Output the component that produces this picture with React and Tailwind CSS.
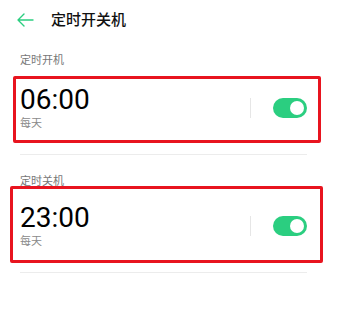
import React from 'react';

const font = { fontFamily: 'Roboto, "Noto Sans CJK SC", sans-serif' };

const Toggle = () => (
  <div className="w-[34px] h-[20px] rounded-full bg-[#2bce80] flex items-center justify-end pr-[3px]">
    <div className="w-[14px] h-[14px] rounded-full bg-white" />
  </div>
);

const TimerRow = ({ time, boxClass }) => (
  <div className={`border-[3px] border-[#e8141f] rounded-[2px] flex items-center ${boxClass}`}>
    <div className="flex-1 flex flex-col">
      <span className="text-[28px] leading-[30px] text-black">{time}</span>
      <span className="text-[11px] leading-[14px] text-[#8a8a8a] mt-[2px]">每天</span>
    </div>
    <div className="w-px h-[20px] bg-[#e6e6e6]" />
    <Toggle />
  </div>
);

export default function App() {
  return (
    <div className="w-[342px] h-[327px] bg-white" style={font}>
      <div className="h-[40px] flex items-center">
        <svg className="ml-[17px] w-[17px] h-[14px]" viewBox="0 0 17 14" fill="none" stroke="#2bce80" strokeWidth="1.4" strokeLinecap="round" strokeLinejoin="round">
          <path d="M1 7h15M7 1L1 7l6 6" />
        </svg>
        <span className="ml-[17px] text-[15px] font-medium text-[#111]">定时开关机</span>
      </div>

      <div className="pl-[20px] pt-[14px] text-[11px] leading-[14px] text-[#777]">定时开机</div>
      <TimerRow
        time="06:00"
        boxClass="mt-[8px] ml-[13px] w-[308px] h-[67px] pl-[4px] pr-[11px] gap-[22px] pb-[4px]"
      />
      <div className="ml-[20px] mt-[11px] h-px bg-[#ececec] w-[287px]" />

      <div className="pl-[20px] pt-[20px] text-[11px] leading-[14px] text-[#777]">定时关机</div>
      <TimerRow
        time="23:00"
        boxClass="mt-[-3px] ml-[10px] w-[313px] h-[77px] pl-[7px] pr-[13px] gap-[22px] pt-[3px]"
      />
      <div className="ml-[20px] mt-[9px] h-px bg-[#ececec] w-[287px]" />
    </div>
  );
}
